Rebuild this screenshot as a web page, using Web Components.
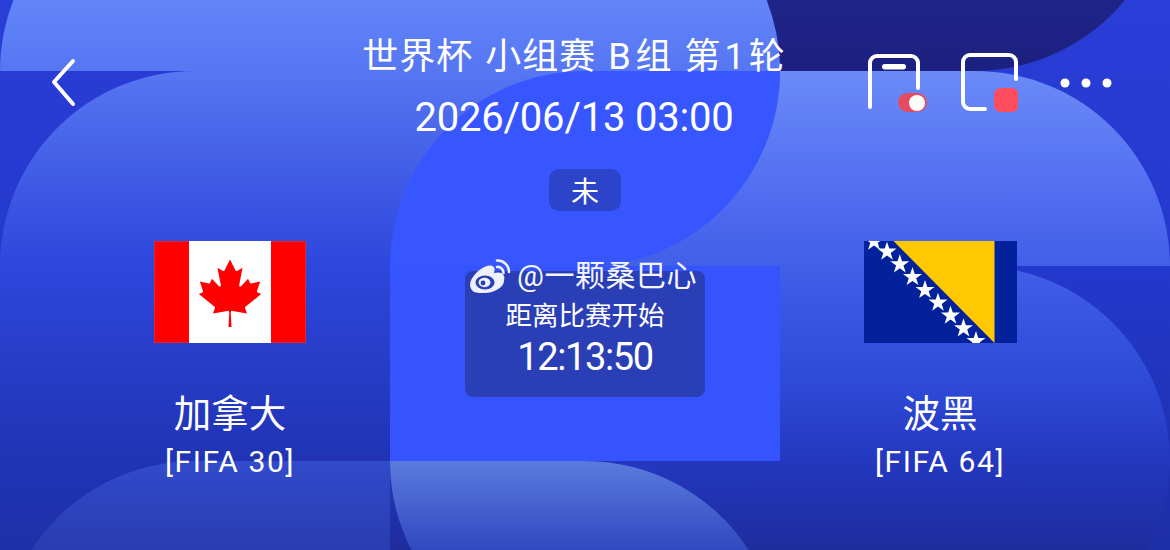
<!doctype html>
<html lang="zh">
<head>
<meta charset="utf-8">
<title>世界杯</title>
<style>
  html, body { margin: 0; padding: 0; background: #1f2fa8; }
</style>
</head>
<body>
<match-page>
  <match-header slot="header" title-text="世界杯 小组赛 B组 第1轮" time-text="2026/06/13 03:00"></match-header>
  <status-badge slot="status">未</status-badge>
  <team-card slot="home" name="加拿大" rank="[FIFA 30]"><flag-canada></flag-canada></team-card>
  <count-down slot="center" label="距离比赛开始" time="12:13:50" mark="@一颗桑巴心"></count-down>
  <team-card slot="away" name="波黑" rank="[FIFA 64]"><flag-bosnia></flag-bosnia></team-card>
</match-page>

<script>
const FONT = `Roboto, "Noto Sans CJK SC", sans-serif`;

class MatchBackdrop extends HTMLElement {
  constructor() {
    super();
    this.attachShadow({ mode: "open" });
  }

  connectedCallback() {
    this.shadowRoot.innerHTML = /* html */`
    <style>
      :host { display: block; position: absolute; inset: 0; overflow: hidden; }
      svg { display: block; }
    </style>
    <svg width="1170" height="550" viewBox="0 0 1170 550">
      <defs>
        <linearGradient id="base" gradientUnits="userSpaceOnUse" x1="0" y1="0" x2="0" y2="550">
          <stop offset="0" stop-color="#2a3ed8"/>
          <stop offset="0.5" stop-color="#2338cc"/>
          <stop offset="1" stop-color="#1e2ea6"/>
        </linearGradient>
        <linearGradient id="left" gradientUnits="userSpaceOnUse" x1="0" y1="0" x2="0" y2="550">
          <stop offset="0" stop-color="#6285f9"/>
          <stop offset="0.13" stop-color="#5676f2"/>
          <stop offset="0.48" stop-color="#2e47dc"/>
          <stop offset="0.84" stop-color="#1f33b4"/>
          <stop offset="1" stop-color="#1f30a8"/>
        </linearGradient>
        <linearGradient id="right" gradientUnits="userSpaceOnUse" x1="0" y1="71" x2="0" y2="550">
          <stop offset="0" stop-color="#6a8bf8"/>
          <stop offset="0.27" stop-color="#4f6cf0"/>
          <stop offset="0.48" stop-color="#3a58e4"/>
          <stop offset="0.645" stop-color="#2e4bd8"/>
          <stop offset="0.81" stop-color="#2438c0"/>
          <stop offset="1" stop-color="#1e2c9c"/>
        </linearGradient>
        <linearGradient id="lens" gradientUnits="userSpaceOnUse" x1="0" y1="461" x2="0" y2="550">
          <stop offset="0" stop-color="#5a7bde"/>
          <stop offset="1" stop-color="#3049bf"/>
        </linearGradient>
        <linearGradient id="foot" gradientUnits="userSpaceOnUse" x1="0" y1="461" x2="0" y2="550">
          <stop offset="0" stop-color="#314bcb"/>
          <stop offset="1" stop-color="#2a3cb0"/>
        </linearGradient>
        <linearGradient id="navy" gradientUnits="userSpaceOnUse" x1="0" y1="0" x2="0" y2="71">
          <stop offset="0" stop-color="#1f2488"/>
          <stop offset="1" stop-color="#1c2080"/>
        </linearGradient>
      </defs>
      <rect width="1170" height="550" fill="url(#base)"/>
      <path d="M700 0H1125A195 195 0 0 1 975 71H700Z" fill="url(#navy)"/>
      <path d="M585 71H975A195 195 0 0 1 1170 266H975A195 195 0 0 1 1170 461A195 195 0 0 1 1148.5 550H390V461H585Z" fill="url(#right)"/>
      <path d="M0 71A195 195 0 0 1 195 -124H585A195 195 0 0 1 780 71A195 195 0 0 1 585 266H390V71H0Z" fill="url(#left)"/>
      <path d="M0 266A195 195 0 0 1 195 71H390V550H0Z" fill="url(#left)"/>
      <path d="M390 266A195 195 0 0 1 585 71H780A195 195 0 0 1 585 266Z" fill="#3856ff"/>
      <rect x="390" y="266" width="390" height="195" fill="#3654fd"/>
      <path d="M31.3 550A195 195 0 0 1 195 461H390V550Z" fill="url(#foot)"/>
      <path d="M390 461H585A195 195 0 0 1 748.7 550H411.5A195 195 0 0 1 390 461Z" fill="url(#lens)"/>
    </svg>`;
  }
}

class MatchPage extends HTMLElement {
  constructor() {
    super();
    this.attachShadow({ mode: "open" });
  }

  connectedCallback() {
    this.shadowRoot.innerHTML = /* html */`
    <style>
      :host {
        display: block;
        position: relative;
        width: 1170px;
        height: 550px;
        overflow: hidden;
        color: #fff;
        font-family: ${FONT};
      }
      .content {
        position: relative;
        display: flex;
        flex-direction: column;
        height: 100%;
      }
      .status { display: flex; justify-content: center; height: 42px; margin-bottom: 30px; }
      .teams {
        display: grid;
        grid-template-columns: 310px 400px 310px;
        padding-left: 75px;
      }
    </style>
    <match-backdrop></match-backdrop>
    <div class="content">
      <slot name="header"></slot>
      <div class="status"><slot name="status"></slot></div>
      <div class="teams">
        <slot name="home"></slot>
        <slot name="center"></slot>
        <slot name="away"></slot>
      </div>
    </div>`;
  }
}

class MatchHeader extends HTMLElement {
  constructor() {
    super();
    this.attachShadow({ mode: "open" });
  }

  connectedCallback() {
    const title = this.getAttribute("title-text")
      .replace("B", `<span class="b">B</span>`)
      .replace("1", `<span class="n">1</span>`);
    this.shadowRoot.innerHTML = /* html */`
    <style>
      :host {
        display: grid;
        grid-template-columns: 364px 420px 386px;
        height: 169px;
      }
      .back { padding: 58px 0 0 50px; }
      .back svg { display: block; }
      .titles { display: flex; flex-direction: column; align-items: center; white-space: nowrap; }
      .title { margin-top: 34px; font-size: 36px; line-height: 46px; letter-spacing: 1px; word-spacing: 2px; }
      .b { margin-right: 4px; }
      .n { margin: 0 3px; }
      .time { margin-top: 15px; font-size: 40px; line-height: 46px; letter-spacing: -0.2px; }
      .actions { display: flex; align-items: flex-start; padding: 52px 0 0 84px; }
      .actions svg { display: block; }
      .phone { margin-right: 32px; }
      .tablet { margin-right: 42px; }
      .more { margin-top: 24px; }
    </style>
    <div class="back">
      <svg width="28" height="50" viewBox="0 0 28 50" fill="none" stroke="#fff" stroke-width="4" stroke-linecap="round" stroke-linejoin="round">
        <path d="M23 3L4 24L23 46"/>
      </svg>
    </div>
    <div class="titles">
      <div class="title">${title}</div>
      <div class="time">${this.getAttribute("time-text")}</div>
    </div>
    <div class="actions">
      <svg class="phone" width="60" height="62" viewBox="868 52 60 62">
        <path d="M870 107V63A7 7 0 0 1 877 56H911A7 7 0 0 1 918 63V88" fill="none" stroke="#fff" stroke-width="4" stroke-linecap="round"/>
        <rect x="882" y="64" width="24" height="5.5" rx="2.75" fill="#fff"/>
        <rect x="898" y="93" width="29" height="19" rx="9.5" fill="#e34c60"/>
        <circle cx="917" cy="103" r="8" fill="#fff"/>
      </svg>
      <svg class="tablet" width="58" height="62" viewBox="960 51 58 62">
        <path d="M1016 78V61A7 7 0 0 0 1009 54H970A7 7 0 0 0 963 61V101A7 7 0 0 0 970 108H985" fill="none" stroke="#fff" stroke-width="4" stroke-linecap="round"/>
        <rect x="994" y="87" width="24.5" height="24" rx="6.5" fill="#ff4d60"/>
      </svg>
      <svg class="more" width="53" height="14" viewBox="1060 76 53 14" fill="#fff">
        <circle cx="1065" cy="83" r="4.5"/>
        <circle cx="1086" cy="83" r="4.5"/>
        <circle cx="1107" cy="83" r="4.5"/>
      </svg>
    </div>`;
  }
}

class StatusBadge extends HTMLElement {
  constructor() {
    super();
    this.attachShadow({ mode: "open" });
  }

  connectedCallback() {
    this.shadowRoot.innerHTML = /* html */`
    <style>
      :host {
        display: flex;
        align-items: center;
        justify-content: center;
        width: 72px;
        height: 42px;
        border-radius: 10px;
        background: #2b44c9;
        font-size: 28px;
      }
    </style>
    <slot></slot>`;
  }
}

class TeamCard extends HTMLElement {
  constructor() {
    super();
    this.attachShadow({ mode: "open" });
  }

  connectedCallback() {
    this.shadowRoot.innerHTML = /* html */`
    <style>
      :host { display: flex; flex-direction: column; align-items: center; }
      .name { margin-top: 46px; font-size: 37.5px; line-height: 50px; }
      .rank { margin-top: 3px; font-size: 30px; line-height: 40px; letter-spacing: 1.6px; }
    </style>
    <slot></slot>
    <div class="name">${this.getAttribute("name")}</div>
    <div class="rank">${this.getAttribute("rank")}</div>`;
  }
}

class CountDown extends HTMLElement {
  constructor() {
    super();
    this.attachShadow({ mode: "open" });
  }

  connectedCallback() {
    this.shadowRoot.innerHTML = /* html */`
    <style>
      :host { display: flex; justify-content: center; padding-top: 30px; }
      .card {
        position: relative;
        display: flex;
        flex-direction: column;
        align-items: center;
        box-sizing: border-box;
        width: 240px;
        height: 126px;
        padding-top: 27px;
        border-radius: 8px;
        background: #2a3fb6;
      }
      .label { font-size: 26.5px; line-height: 36px; }
      .time { margin-top: 0; font-size: 38px; line-height: 46px; letter-spacing: -1.4px; }
      /* watermark sits over the card edge */
      .mark {
        position: absolute;
        left: 5px;
        top: -13px;
        display: flex;
        align-items: center;
        gap: 5px;
        white-space: nowrap;
        font-size: 30px;
        line-height: 30px;
        letter-spacing: 0.5px;
        color: #f4f6ff;
      }
      .mark svg { display: block; }
    </style>
    <div class="card">
      <div class="label">${this.getAttribute("label")}</div>
      <div class="time">${this.getAttribute("time")}</div>
      <div class="mark">
        <svg width="42" height="36" viewBox="470 257 42 36">
          <path d="M474 291C469 288 469 281 473 276C478 269 487 263 492 265C495 266 495 269 494 272C498 271 503 271 504 275C505 277 504 278 504 280C504 286 494 292 485 292C481 292 477 292 474 291Z" fill="#eef0fb"/>
          <ellipse cx="485" cy="281.500" rx="9.500" ry="7" fill="#2a3fb6"/>
          <ellipse cx="484.500" cy="281.500" rx="6" ry="4.700" fill="#eef0fb"/>
          <circle cx="483" cy="282" r="2.400" fill="#2a3fb6"/>
          <path d="M497 259.500C503 259 509 264 509 271" fill="none" stroke="#eef0fb" stroke-width="2.600" stroke-linecap="round"/>
          <path d="M497 266C500 265.500 503.500 268 503.500 272" fill="none" stroke="#eef0fb" stroke-width="2.600" stroke-linecap="round"/>
        </svg>
        <span>${this.getAttribute("mark")}</span>
      </div>
    </div>`;
  }
}

class FlagCanada extends HTMLElement {
  constructor() {
    super();
    this.attachShadow({ mode: "open" });
  }

  connectedCallback() {
    this.shadowRoot.innerHTML = /* html */`
    <style>
      :host { display: block; width: 152px; height: 102px; }
      svg { display: block; }
    </style>
    <svg width="152" height="102" viewBox="0 0 152 102">
      <rect width="152" height="102" fill="#f00"/>
      <rect x="35" width="82" height="102" fill="#fff"/>
      <path d="M0.5 0.5H35M117 0.5H151.500V101.500H117M35 101.500H0.5V0.5" fill="none" stroke="#e0303f" stroke-opacity="0.7"/>
      <g transform="translate(76 18) scale(0.01675) translate(-4800 -370)">
        <path fill="#f00" d="M4890 4430l-45-863a95 95 0 0 1 111-98l859 151-116-320a65 65 0 0 1 20-73l941-762-212-99a65 65 0 0 1-34-79l186-572-542 115a65 65 0 0 1-73-38l-105-247-423 454a65 65 0 0 1-111-57l204-1052-327 189a65 65 0 0 1-91-27l-332-652-332 652a65 65 0 0 1-91 27l-327-189 204 1052a65 65 0 0 1-111 57l-423-454-105 247a65 65 0 0 1-73 38l-542-115 186 572a65 65 0 0 1-34 79l-212 99 941 762a65 65 0 0 1 20 73l-116 320 859-151a95 95 0 0 1 111 98l-45 863z"/>
      </g>
    </svg>`;
  }
}

class FlagBosnia extends HTMLElement {
  constructor() {
    super();
    this.attachShadow({ mode: "open" });
  }

  connectedCallback() {
    const star = "M0 -10L2.300 -3.100L9.500 -3.100L3.700 1.200L5.900 8.100L0 3.900L-5.900 8.100L-3.700 1.200L-9.500 -3.100L-2.300 -3.100Z";
    const centers = [[10, 0.6], [23, 10.7], [35.800, 23.300], [48.500, 36], [61, 49], [74, 61.700], [86.500, 74.700], [99.500, 87.300], [112, 100]];
    const stars = centers.map(([x, y]) => `<path d="${star}" transform="translate(${x} ${y})" fill="#fff"/>`).join("");
    this.shadowRoot.innerHTML = /* html */`
    <style>
      :host { display: block; width: 153px; height: 102px; }
      svg { display: block; }
    </style>
    <svg width="153" height="102" viewBox="0 0 153 102">
      <rect width="153" height="102" fill="#03219b"/>
      <path d="M29.500 0H130.500V102Z" fill="#ffc800"/>
      ${stars}
    </svg>`;
  }
}

customElements.define("match-backdrop", MatchBackdrop);
customElements.define("match-page", MatchPage);
customElements.define("match-header", MatchHeader);
customElements.define("status-badge", StatusBadge);
customElements.define("team-card", TeamCard);
customElements.define("count-down", CountDown);
customElements.define("flag-canada", FlagCanada);
customElements.define("flag-bosnia", FlagBosnia);
</script>
</body>
</html>
